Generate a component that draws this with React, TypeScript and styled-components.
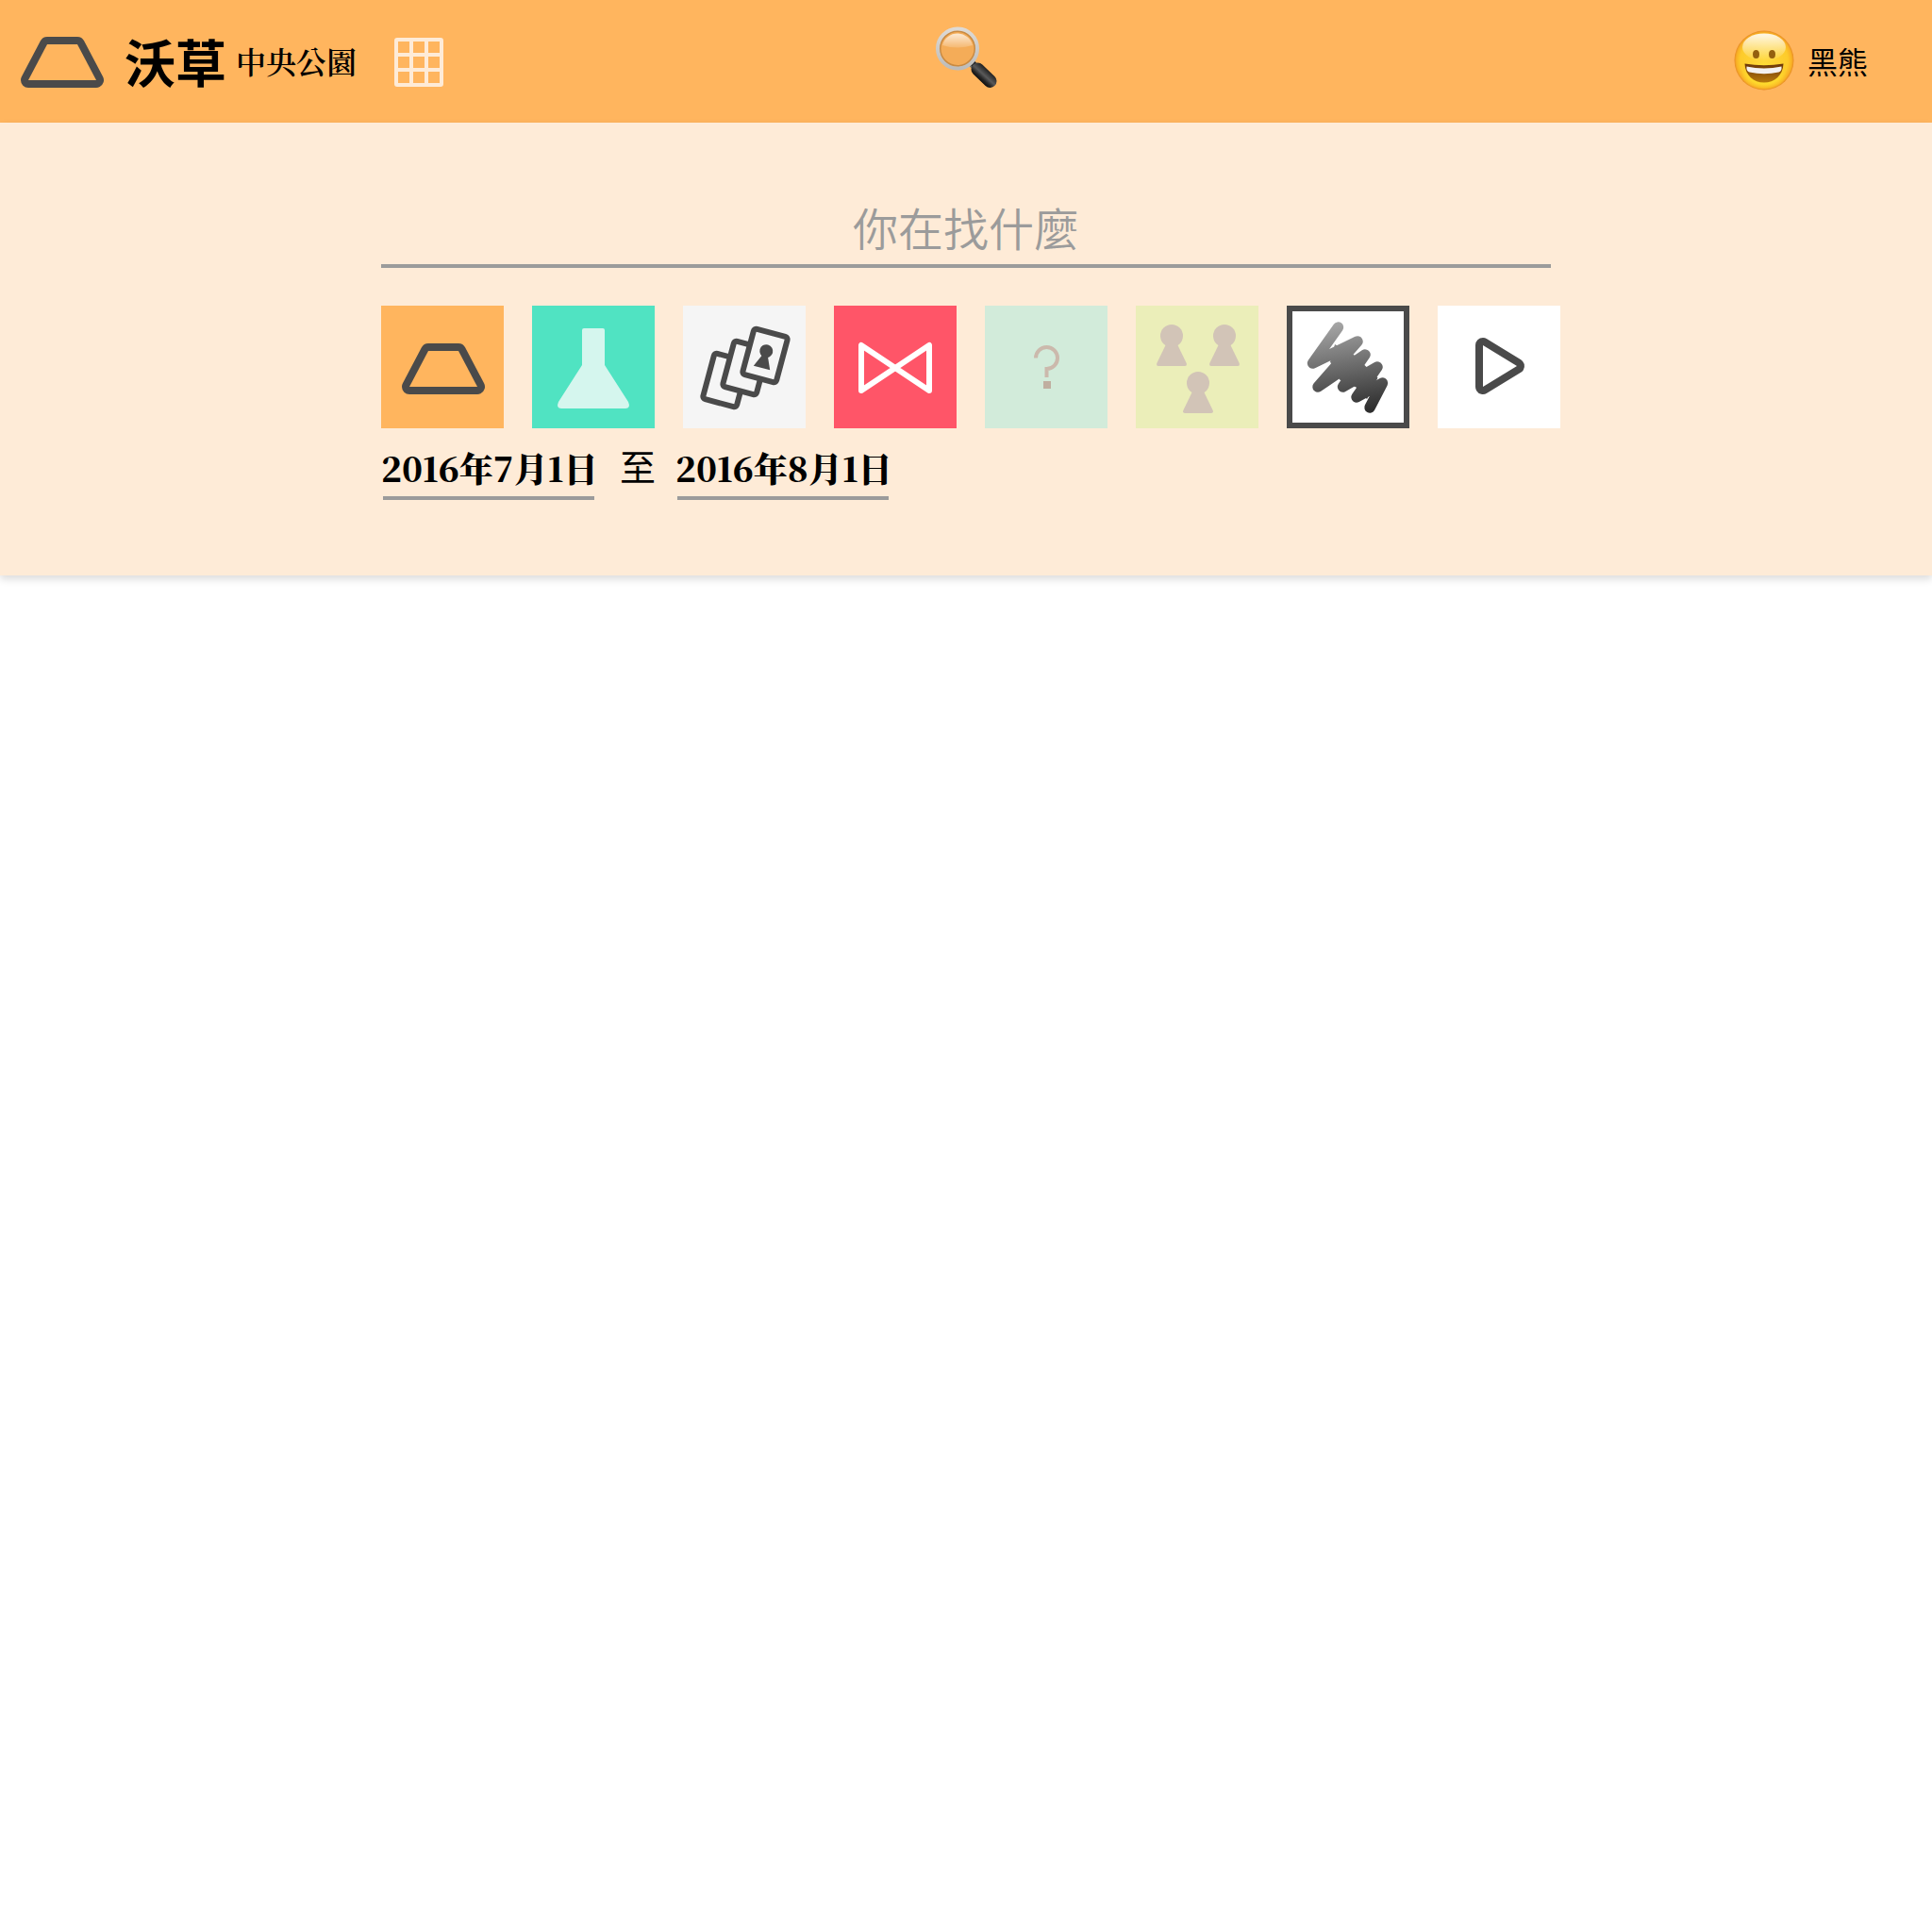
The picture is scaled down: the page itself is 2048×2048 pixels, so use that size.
import React from "react";
import styled, { createGlobalStyle } from "styled-components";

const ink = "#4a4a4a";
const orange = "#ffb55e";
const cream = "#feebd7";
const rule = "#9b9b9b";

const sans = `"Noto Sans CJK TC", "Noto Sans", sans-serif`;
const serif = `"Noto Serif CJK TC", "Liberation Serif", "Noto Sans CJK TC", serif`;

const GlobalStyle = createGlobalStyle`
  *, *::before, *::after { box-sizing: border-box; }
  body { margin: 0; min-height: 100vh; background: #fff; color: #000; font-family: ${sans}; }
  a { color: inherit; text-decoration: none; }
  button, input { font: inherit; color: inherit; border: 0; padding: 0; margin: 0; background: none; border-radius: 0; }
  button { cursor: pointer; }
  svg { display: block; }
`;

const Header = styled.header`
  display: grid;
  grid-template-columns: 1fr auto 1fr;
  align-items: center;
  height: 130px;
  padding: 0 68px 0 22px;
  background: ${orange};
`;

const HeaderStart = styled.div`
  display: flex;
  align-items: center;
  gap: 40px;
  padding-top: 2px;
`;

const Brand = styled.a`
  display: flex;
  align-items: center;
  white-space: nowrap;
`;

const BrandName = styled.span`
  margin: 0 10px 0 20px;
  font-size: 54px;
  line-height: 64px;
  padding-bottom: 2px;
  font-weight: 700;
`;

const BrandPlace = styled.span`
  padding-bottom: 4px;
  font-family: ${serif};
  font-size: 32px;
  line-height: 40px;
  font-weight: 600;
`;

const IconButton = styled.button`
  display: block;
`;

const SearchToggle = styled(IconButton)`
  margin: 0 0 8px 48px;
`;

const Account = styled.a`
  display: flex;
  align-items: center;
  justify-self: end;
  gap: 14px;
  padding-bottom: 2px;
  font-size: 32px;
  line-height: 40px;
`;

const Panel = styled.section`
  position: relative;
  padding: 76px 24px 80px;
  background: ${cream};
  box-shadow: 0 4px 8px rgba(0, 0, 0, 0.14);
`;

const Form = styled.form`
  max-width: 1240px;
  margin: 0 auto;
`;

const SearchInput = styled.input`
  display: block;
  width: 100%;
  height: 78px;
  padding-bottom: 6px;
  border-bottom: 4px solid ${rule};
  font-size: 48px;
  font-weight: 350;
  text-align: center;
  outline: none;

  &::placeholder {
    color: ${rule};
    opacity: 1;
  }
`;

const Tiles = styled.div`
  display: flex;
  gap: 30px;
  margin-top: 40px;
`;

const Tile = styled.button<{ $bg: string; $framed?: boolean }>`
  flex: none;
  width: 130px;
  height: 130px;
  background: ${(p) => p.$bg};
  box-shadow: ${(p) => (p.$framed ? `inset 0 0 0 6px ${ink}` : "none")};
`;

const DateRange = styled.div`
  display: flex;
  align-items: flex-start;
  gap: 21px;
  margin-top: 16px;
  font-size: 38px;
  line-height: 46px;
`;

const DateInput = styled.input`
  width: 232px;
  height: 60px;
  padding-bottom: 10px;
  background: linear-gradient(${rule}, ${rule}) 2px bottom / 224px 4px no-repeat;
  font-family: ${serif};
  font-size: 36px;
  font-weight: 900;
  outline: none;
`;

const Trapezoid = () => (
  <path d="M50 48H82L102 86H30Z" fill={orange} stroke={ink} strokeWidth="16" strokeLinejoin="round" paintOrder="stroke" />
);

const Flask = () => (
  <path
    d="M55 24H75Q77 24 77 26V63L102 102Q105 109 99 109H31Q25 109 28 102L53 63V26Q53 24 55 24Z"
    fill="#d5f6ee"
  />
);

const Cards = () => (
  <g fill="#f5f5f5" stroke={ink} strokeWidth="6">
    {[[45, 79], [66, 66], [87, 53]].map(([x, y]) => (
      <rect key={x} x="-18.500" y="-25" width="37" height="50" rx="3" transform={`translate(${x} ${y}) rotate(15)`} />
    ))}
    <g transform="translate(87 53) rotate(15)" fill={ink} stroke="none">
      <circle cy="-5" r="7" />
      <path d="M-3 0H3L9 13.500H-9Z" />
    </g>
  </g>
);

const BowTie = () => (
  <path d="M29 42V90L101 42V90Z" fill="none" stroke="#fff" strokeWidth="6" strokeLinejoin="round" />
);

const Question = () => (
  <>
    <path d="M54 55.500A11.500 11.500 0 1 1 65.500 67V76" fill="none" stroke="#cbb9ac" strokeWidth="4" />
    <path d="M62 80h8v8h-8z" fill="#c0afa0" />
  </>
);

const Pawns = () => (
  <g fill="#d2c4b7">
    {[[38, 32], [94, 32], [66, 82]].map(([x, y]) => (
      <g key={`${x}-${y}`} transform={`translate(${x} ${y})`}>
        <circle r="12" />
        <path d="M-6.500 10H6.500L15.700 29Q16.500 32 14 32H-14Q-16.500 32 -15.700 29Z" />
      </g>
    ))}
  </g>
);

const Scribble = () => (
  <>
    <defs>
      <linearGradient id="scribble" gradientUnits="userSpaceOnUse" x1="58" y1="17" x2="74" y2="113">
        <stop offset="0" stopColor="#a6a6a6" />
        <stop offset="1" stopColor="#2e2e2e" />
      </linearGradient>
    </defs>
    <path
      d="M54.500 23L27.500 61L75 38L33 86L83 52L59.500 86L96 65L74 97L101.500 82L88 108"
      fill="none"
      stroke="url(#scribble)"
      strokeWidth="11.400"
      strokeLinejoin="round"
      strokeLinecap="round"
    />
    <path d="M51 41L71 52L84 64.500L96.500 76.500L85 99L73.500 86.500L56 78.500L46 59.500Z" fill="url(#scribble)" />
  </>
);

const Play = () => (
  <path d="M48 42L84 64L48 86Z" fill="#fff" stroke={ink} strokeWidth="16" strokeLinejoin="round" paintOrder="stroke" />
);

const GridIcon = () => (
  <svg width="52" height="52" viewBox="0 0 52 52" aria-hidden="true">
    <rect x="2" y="2" width="48" height="48" rx="1" fill="none" stroke={cream} strokeWidth="4" />
    <path d="M18 2V50M34 2V50M2 18H50M2 34H50" stroke={cream} strokeWidth="4" />
  </svg>
);

const Magnifier = () => (
  <svg width="66" height="66" viewBox="0 0 66 66" aria-hidden="true">
    <defs>
      <linearGradient id="rim" x1="0" y1="0" x2="0" y2="1">
        <stop offset="0" stopColor="#dedad5" />
        <stop offset="1" stopColor="#bdbcba" />
      </linearGradient>
      <linearGradient id="glare" x1="0" y1="0" x2="0" y2="1">
        <stop offset="0" stopColor="#fff" stopOpacity="0.75" />
        <stop offset="1" stopColor="#fff" stopOpacity="0.15" />
      </linearGradient>
      <linearGradient id="grip" gradientUnits="userSpaceOnUse" x1="56" y1="45" x2="45" y2="57">
        <stop offset="0" stopColor="#161616" />
        <stop offset="0.5" stopColor="#5a5a5a" />
        <stop offset="0.75" stopColor="#262626" />
        <stop offset="1" stopColor="#0a0a0a" />
      </linearGradient>
    </defs>
    <path d="M37 38L45 46" stroke="#6b675f" strokeWidth="8" />
    <path d="M38 42L42 38" stroke="#222" strokeWidth="3" />
    <path d="M44.500 45.500L57.500 58" stroke="url(#grip)" strokeWidth="14" strokeLinecap="round" />
    <circle cx="23" cy="23.500" r="19" fill="#f4ac58" />
    <circle cx="23" cy="23.500" r="18.500" fill="none" stroke="#c98a42" strokeWidth="2" />
    <path d="M7 20A16.500 16.500 0 0 1 39 20Q23 25 7 20Z" fill="url(#glare)" />
    <circle cx="23" cy="23.500" r="21" fill="none" stroke="url(#rim)" strokeWidth="4" />
  </svg>
);

const Smiley = () => (
  <svg width="64" height="64" viewBox="0 0 64 64" aria-hidden="true">
    <defs>
      <radialGradient id="face" cx="0.5" cy="0.5" r="0.5">
        <stop offset="0" stopColor="#ffd83a" />
        <stop offset="0.8" stopColor="#fdcb2b" />
        <stop offset="0.93" stopColor="#f9b125" />
        <stop offset="1" stopColor="#e78b25" />
      </radialGradient>
      <linearGradient id="shine" x1="0" y1="0" x2="0" y2="1">
        <stop offset="0" stopColor="#fff" stopOpacity="0.9" />
        <stop offset="1" stopColor="#fff" stopOpacity="0" />
      </linearGradient>
      <radialGradient id="chin" cx="0.5" cy="0.5" r="0.5">
        <stop offset="0" stopColor="#ffed2e" />
        <stop offset="1" stopColor="#ffed2e" stopOpacity="0" />
      </radialGradient>
      <linearGradient id="mouth" x1="0" y1="0" x2="0" y2="1">
        <stop offset="0" stopColor="#6b3508" />
        <stop offset="1" stopColor="#b87a0c" />
      </linearGradient>
    </defs>
    <circle cx="32" cy="32" r="31.500" fill="url(#face)" />
    <ellipse cx="32" cy="48" rx="24" ry="15" fill="url(#chin)" />
    <ellipse cx="32" cy="18" rx="23" ry="14.500" fill="url(#shine)" />
    <ellipse cx="23.500" cy="25.500" rx="3.500" ry="4.500" fill="#94600f" />
    <ellipse cx="40.500" cy="25.500" rx="3.500" ry="4.500" fill="#94600f" />
    <path d="M11.500 35.500Q32 39 52.500 35.500C52 48 43 55.500 32 55.500S12 48 11.500 35.500Z" fill="url(#mouth)" />
    <path d="M13.500 38.500Q32 42.500 50.500 38.500Q51 43.500 47.500 44.500Q32 48 16.500 44.500Q13 43.500 13.500 38.500Z" fill="#f3f1f1" />
  </svg>
);

const categories = [
  { label: "中央公園", bg: orange, Icon: Trapezoid },
  { label: "實驗室", bg: "#50e3c2", Icon: Flask },
  { label: "卡片", bg: "#f5f5f5", Icon: Cards },
  { label: "領結", bg: "#ff5568", Icon: BowTie },
  { label: "問題", bg: "#d2ebda", Icon: Question },
  { label: "人物", bg: "#ebeeb9", Icon: Pawns },
  { label: "塗鴉", bg: "#fff", Icon: Scribble, framed: true },
  { label: "影片", bg: "#fff", Icon: Play },
];

export default function App() {
  return (
    <>
      <GlobalStyle />
      <Header>
        <HeaderStart>
          <Brand href="#">
            <svg width="90" height="54" viewBox="22 40 90 54" aria-hidden="true">
              <Trapezoid />
            </svg>
            <BrandName>沃草</BrandName>
            <BrandPlace>中央公園</BrandPlace>
          </Brand>
          <IconButton type="button" aria-label="選單">
            <GridIcon />
          </IconButton>
        </HeaderStart>
        <SearchToggle type="button" aria-label="搜尋">
          <Magnifier />
        </SearchToggle>
        <Account href="#">
          <Smiley />
          <span>黑熊</span>
        </Account>
      </Header>
      <Panel>
        <Form onSubmit={(e) => e.preventDefault()}>
          <SearchInput type="text" aria-label="搜尋" placeholder="你在找什麼" />
          <Tiles>
            {categories.map(({ label, bg, Icon, framed }) => (
              <Tile key={label} type="button" aria-label={label} $bg={bg} $framed={framed}>
                <svg width="130" height="130" viewBox="0 0 130 130" aria-hidden="true">
                  <Icon />
                </svg>
              </Tile>
            ))}
          </Tiles>
          <DateRange>
            <DateInput type="text" aria-label="開始日期" defaultValue="2016年7月1日" />
            <span>至</span>
            <DateInput type="text" aria-label="結束日期" defaultValue="2016年8月1日" />
          </DateRange>
        </Form>
      </Panel>
    </>
  );
}
